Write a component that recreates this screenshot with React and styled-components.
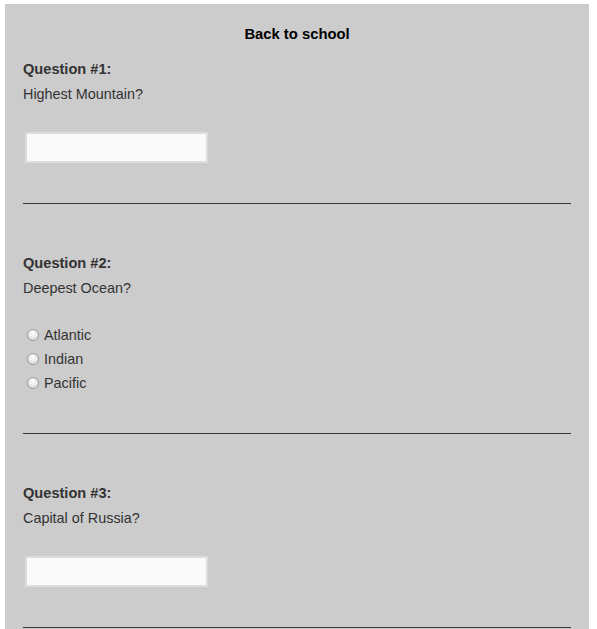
import React from "react";
import styled, { createGlobalStyle } from "styled-components";

const GlobalStyle = createGlobalStyle`
  html, body {
    margin: 0;
    padding: 0;
    background: #fff;
  }
  body {
    font-family: "Liberation Sans", Arial, sans-serif;
  }
`;

const Page = styled.div`
  padding: 4px 8px 0 5px;
`;

const Panel = styled.div`
  background: #cccccc;
  padding: 18px 18px 2px;
  min-height: 625px;
  box-sizing: border-box;
`;

const Title = styled.div`
  text-align: center;
  font-size: 14.8px;
  font-weight: bold;
  color: #000;
  line-height: 25px;
  margin-bottom: 10px;
`;

const Question = styled.div`
  & + & {
    margin-top: 47px;
  }
`;

const Label = styled.div`
  font-size: 14.6px;
  font-weight: bold;
  color: #333;
  line-height: 25px;
`;

const Prompt = styled.div`
  font-size: 14.4px;
  color: #333;
  line-height: 25px;
`;

const TextInput = styled.input`
  display: block;
  box-sizing: border-box;
  width: 183px;
  height: 31px;
  margin: 25px 0 0 2px;
  border: 2px solid #dcdcdc;
  background: #fafafa;
  outline: none;
`;

const Options = styled.div`
  margin-top: 22px;
  padding-left: 4px;
`;

const Option = styled.label`
  display: flex;
  align-items: center;
  gap: 5px;
  height: 24px;
  font-size: 14.4px;
  color: #333;
`;

const Radio = styled.input`
  appearance: none;
  margin: 0;
  width: 12px;
  height: 12px;
  border-radius: 50%;
  border: 1px solid #9a9a9a;
  background: radial-gradient(circle at 50% 35%, #ffffff 0%, #e6e6e6 60%, #cfcfcf 100%);
  box-sizing: border-box;
`;

const Divider = styled.hr`
  border: 0;
  height: 1px;
  background: #3a3a3a;
  margin: ${p => p.$gap}px 0 0;
`;

const questions = [
  { n: 1, prompt: "Highest Mountain?", type: "text" },
  { n: 2, prompt: "Deepest Ocean?", type: "radio", options: ["Atlantic", "Indian", "Pacific"] },
  { n: 3, prompt: "Capital of Russia?", type: "text" }
];

const App = () => (
  <Page>
    <GlobalStyle />
    <Panel>
      <Title>Back to school</Title>
      {questions.map(q => (
        <Question key={q.n}>
          <Label>Question #{q.n}:</Label>
          <Prompt>{q.prompt}</Prompt>
          {q.type === "text" ? (
            <TextInput type="text" />
          ) : (
            <Options>
              {q.options.map(o => (
                <Option key={o}>
                  <Radio type="radio" name={`q${q.n}`} />
                  {o}
                </Option>
              ))}
            </Options>
          )}
          <Divider $gap={q.type === "text" ? 40 : 38} />
        </Question>
      ))}
    </Panel>
  </Page>
);

export default App;
